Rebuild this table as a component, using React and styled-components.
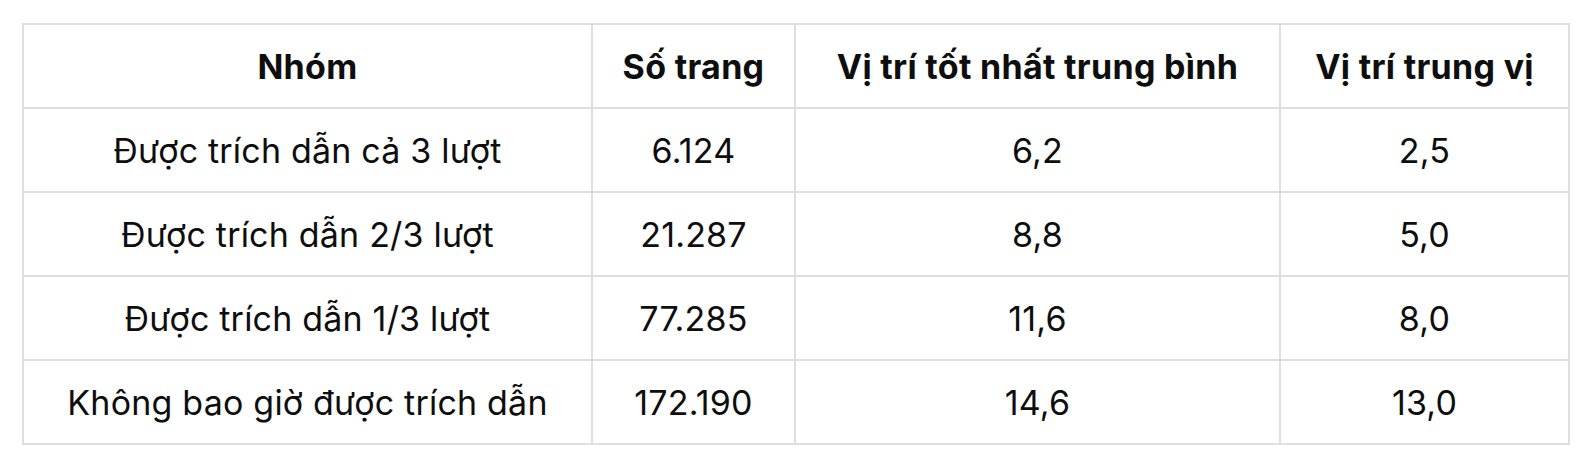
import React from "react";
import styled, { createGlobalStyle } from "styled-components";

const GlobalStyle = createGlobalStyle`
    html, body {
        margin: 0;
        padding: 0;
        background: #ffffff;
    }
    body {
        font-family: Inter, "Noto Sans", "Liberation Sans", sans-serif;
        color: #111111;
    }
`;

const headers = ["Nhóm", "Số trang", "Vị trí tốt nhất trung bình", "Vị trí trung vị"];

const rows = [
    ["Được trích dẫn cả 3 lượt", "6.124", "6,2", "2,5"],
    ["Được trích dẫn 2/3 lượt", "21.287", "8,8", "5,0"],
    ["Được trích dẫn 1/3 lượt", "77.285", "11,6", "8,0"],
    ["Không bao giờ được trích dẫn", "172.190", "14,6", "13,0"],
];

const colWidths = [569, 203, 485, 289];

const App = () => {
    return (
        <>
            <GlobalStyle />
            <Page>
                <Table>
                    <colgroup>
                        {colWidths.map((w, i) => (
                            <col key={i} style={{ width: w }} />
                        ))}
                    </colgroup>
                    <thead>
                        <Row>
                            {headers.map((h) => (
                                <HeadCell key={h}>{h}</HeadCell>
                            ))}
                        </Row>
                    </thead>
                    <tbody>
                        {rows.map((r) => (
                            <Row key={r[0]}>
                                {r.map((c, i) => (
                                    <Cell key={i}>{c}</Cell>
                                ))}
                            </Row>
                        ))}
                    </tbody>
                </Table>
            </Page>
        </>
    );
};

export default App;

const Page = styled.div`
    padding: 23px 0 0 22px;
`;

const Table = styled.table`
    border-collapse: collapse;
    table-layout: fixed;
    width: 1546px;
`;

const Row = styled.tr`
    height: 84px;
`;

const HeadCell = styled.th`
    border: 2px solid #dedede;
    padding: 0 8px;
    text-align: center;
    font-size: 34px;
    font-weight: 700;
    letter-spacing: 0.3px;
    color: #0e0e0e;
    white-space: nowrap;
`;

const Cell = styled.td`
    border: 2px solid #dedede;
    padding: 0 8px;
    text-align: center;
    font-size: 34px;
    font-weight: 400;
    letter-spacing: 0.2px;
    color: #0e0e0e;
    white-space: nowrap;
`;
